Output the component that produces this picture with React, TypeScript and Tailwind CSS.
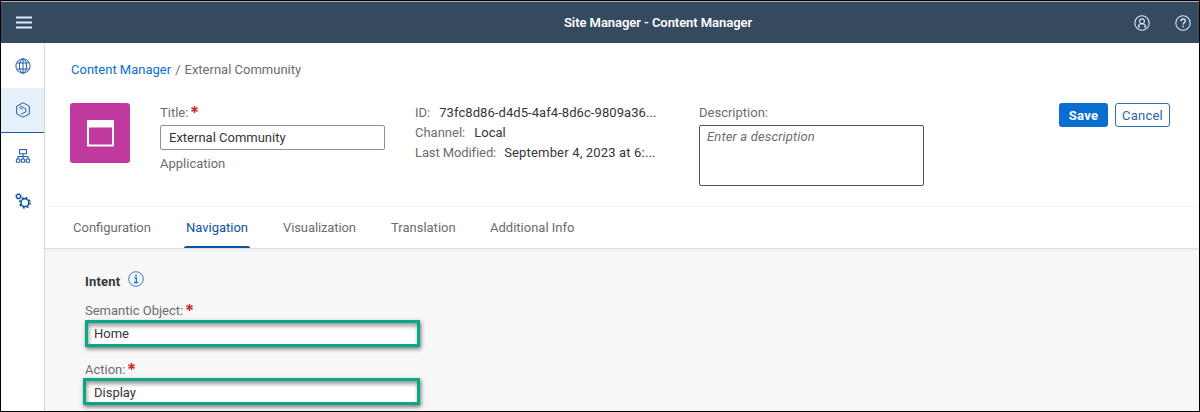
import React from "react";

type IconProps = { className?: string };

function GlobeIcon() {
  return (
    <svg className="h-4 w-4" viewBox="0 0 16 16" fill="none" stroke="#1f5fa8" strokeWidth="1">
      <circle cx="8" cy="8" r="7.1" />
      <ellipse cx="8" cy="8" rx="3.6" ry="7.1" />
      <path d="M8 1v14M1.8 5h12.4M1.8 11h12.4" />
    </svg>
  );
}

function ContentIcon() {
  return (
    <svg className="h-4 w-4" viewBox="0 0 16 16" fill="none" stroke="#1f5fa8" strokeWidth="1" strokeLinejoin="round">
      <path d="M8 .8l6.300 3.300v7.800L8 15.200l-6.300-3.300V4.100z" />
      <path d="M5.200 3.800l5.600 3v3.400M4.200 5.500l3.300 1.800M6.200 12.200l4.600-2.400" />
    </svg>
  );
}

function SitemapIcon() {
  return (
    <svg className="h-4 w-4" viewBox="0 0 16 16" fill="none" stroke="#1f5fa8" strokeWidth="1.1">
      <path d="M4.500 1.500h7v4.200h-7zM8 5.700v5.500M3 11V8.500h10V11" />
      <rect x="1.400" y="11" width="3.400" height="3.200" rx=".8" />
      <rect x="6.300" y="11" width="3.400" height="3.200" rx=".8" />
      <rect x="11.200" y="11" width="3.400" height="3.200" rx=".8" />
    </svg>
  );
}

function GearsIcon() {
  return (
    <svg className="h-4 w-4" viewBox="0 0 16 16" fill="none" stroke="#0d4f9c">
      <circle cx="9.900" cy="9.700" r="3.900" strokeWidth="1.500" />
      <circle cx="9.900" cy="9.700" r="5.200" strokeWidth="1.500" strokeDasharray="2 2.084" />
      <circle cx="3.500" cy="3.400" r="2" strokeWidth="1.100" />
      <circle cx="3.500" cy="3.400" r="2.800" strokeWidth=".9" strokeDasharray="1.100 1.100" />
    </svg>
  );
}

function UserIcon({ className }: IconProps) {
  return (
    <svg className={className} viewBox="0 0 16 16" fill="none" stroke="#d4e7fa" strokeWidth="1.1">
      <circle cx="8" cy="8" r="7.200" />
      <circle cx="8" cy="6.300" r="2.400" />
      <path d="M4.200 11.900c.2-2 1.500-3.200 3.800-3.200s3.600 1.200 3.800 3.200M4 11.900h2M10 11.900h2" />
    </svg>
  );
}

function HelpIcon({ className }: IconProps) {
  return (
    <svg className={className} viewBox="0 0 16 16" fill="none" stroke="#d4e7fa" strokeWidth="1.100">
      <circle cx="8" cy="8" r="7.200" />
      <path d="M5.900 6.300C5.900 4.800 6.800 4 8.100 4s2.200.8 2.200 2-2.200 1.900-2.200 3.600" strokeWidth="1.400" />
      <path d="M8.100 10.800v1.500" strokeWidth="1.500" />
    </svg>
  );
}

function InfoIcon() {
  return (
    <svg className="h-4 w-4" viewBox="0 0 16 16" fill="none" stroke="#2f7fd3" strokeWidth="1">
      <circle cx="8" cy="8" r="7.300" />
      <path d="M6.300 6.800h2V11.500M6 11.600h4.200" stroke="#0a6ed1" strokeWidth="1.300" />
      <path d="M7.200 4.500h1.600" stroke="#0a6ed1" strokeWidth="1.600" />
    </svg>
  );
}

function Required() {
  return (
    <svg className="ml-[3px] mt-[3px] h-[7px] w-[7px]" viewBox="0 0 8 8" stroke="#cc2929" strokeWidth="1.700">
      <path d="M4 0v8M.5 2l7 4M7.500 2l-7 4" />
    </svg>
  );
}

function SideItem({ active, children }: { active?: boolean; children: React.ReactNode }) {
  return (
    <div
      className={
        active
          ? "flex h-[45px] items-center justify-center border-b border-[#1f5fa8] bg-[#e5f0fa]"
          : "flex h-[45px] items-center justify-center"
      }
    >
      {children}
    </div>
  );
}

export default function App() {
  return (
    <div className="flex h-[412px] w-[1200px] flex-col overflow-hidden border border-black bg-white font-['Roboto','Noto_Sans',sans-serif] text-[13px] leading-5 text-[#6a6d70]">
      <header className="flex h-[42px] shrink-0 items-center border-t border-[#a9adb3] bg-[#354a5f] pl-[15px] pr-2">
        <svg className="h-4 w-4 shrink-0" viewBox="0 0 16 16" stroke="#dcecfb">
          <path d="M0 2.500h16M0 7.500h16M0 12.500h16" strokeWidth="1.800" />
        </svg>
        <h1 className="ml-[532px] flex-1 whitespace-nowrap text-[13px] font-semibold tracking-[-0.06px] text-white"><span>Site Manager - Content Manager</span></h1>
        <UserIcon className="mr-[25px] h-4 w-4" />
        <HelpIcon className="h-4 w-4" />
      </header>
      <div className="flex min-h-0 flex-1">
        <nav className="w-11 shrink-0 border-r border-[#d9d9d9]">
          <SideItem><GlobeIcon /></SideItem>
          <SideItem active><ContentIcon /></SideItem>
          <SideItem><SitemapIcon /></SideItem>
          <SideItem><GearsIcon /></SideItem>
        </nav>
        <main className="flex min-w-0 flex-1 flex-col">
          <section className="h-[164px] shrink-0 border-b border-[#f5f5f5] pl-[25px] pt-[17px]">
            <div className="flex gap-1 pl-px">
              <a className="text-[#0a6ed1]">Content Manager</a>
              <span>/</span>
              <span>External Community</span>
            </div>
            <div className="mt-[23px] flex items-start">
              <div className="flex h-[60px] w-[60px] items-center justify-center rounded-[3px] bg-[#c0399f]">
                <svg className="h-[27px] w-[27px]" viewBox="0 0 27 27">
                  <rect width="27" height="26.500" rx="1" fill="#fff" />
                  <path d="M2 7.500h23v17H2z" fill="#c0399f" />
                </svg>
              </div>
              <div className="ml-[30px] w-[225px]">
                <div className="flex h-[22px]"><span>Title:</span><Required /></div>
                <div className="flex h-[25px] items-center rounded-[2px] border border-[#89919a] pl-2 text-[#32363a]">
                  <span>External Community</span>
                </div>
                <div className="mt-1"><span>Application</span></div>
              </div>
              <dl className="ml-[30px] w-[284px] whitespace-nowrap">
                <div className="flex gap-[9px]"><dt>ID:</dt><dd className="tracking-[0.07px] text-[#32363a]">73fc8d86-d4d5-4af4-8d6c-9809a36...</dd></div>
                <div className="flex gap-[9px]"><dt>Channel:</dt><dd className="text-[#32363a]">Local</dd></div>
                <div className="flex gap-2"><dt className="tracking-[-0.1px]">Last Modified:</dt><dd className="tracking-[0.17px] text-[#32363a]">September 4, 2023 at 6:...</dd></div>
              </dl>
              <div className="w-[225px]">
                <div className="h-[22px]"><span>Description:</span></div>
                <div className="h-[61px] rounded-[2px] border border-[#505356] pl-[7px] pt-px italic tracking-[0.15px]"><span>Enter a description</span></div>
              </div>
              <div className="ml-[135px] flex gap-[7px] tracking-[0.25px]">
                <button className="h-6 w-[49px] rounded-[3px] bg-[#0a6ed1] pt-px font-bold leading-none text-white"><span>Save</span></button>
                <button className="h-6 w-[55px] rounded-[3px] border border-[#2a6fb8] pt-px leading-none text-[#2a66a8]"><span>Cancel</span></button>
              </div>
            </div>
          </section>
          <div className="flex h-[41px] shrink-0 whitespace-nowrap pl-7 pt-[11px]">
            <span className="h-5 w-[111px]">Configuration</span>
            <div className="mr-[33px] flex h-[31px] w-[66px] flex-col items-center justify-between whitespace-nowrap text-[#0854a0]">
              <span>Navigation</span>
              <span className="h-[3px] w-[66px] shrink-0 rounded-t-[2px] bg-[#0854a0]" />
            </div>
            <span className="h-5 w-[108px] tracking-[-0.1px]">Visualization</span>
            <span className="h-5 w-[99px]">Translation</span>
            <span className="h-5">Additional Info</span>
          </div>
          <section className="flex-1 bg-[#f7f7f7] pl-10 shadow-[inset_0_2px_2px_-1px_#d5d5d5]">
            <div className="flex h-[53px] items-start pt-[23px]">
              <h2 className="pt-px font-bold tracking-[0.2px] text-[#32363a]">Intent</h2>
              <div className="ml-2"><InfoIcon /></div>
            </div>
            <div className="flex h-[19px]"><span>Semantic Object:</span><Required /></div>
            <div className="flex h-[27px] w-[335px] items-center border-[3px] border-[#07a882] bg-white pl-[6px] text-[#32363a] shadow-[1px_2px_4px_#777,inset_1px_3px_4px_#999]">
              <span>Home</span>
            </div>
            <div className="mt-[13px] flex h-[18px]"><span>Action:</span><Required /></div>
            <div className="-ml-0.5 flex h-[27px] w-[337px] items-center border-[3px] border-[#07a882] bg-white pl-2 pt-0.5 text-[#32363a] shadow-[1px_2px_4px_#777,inset_1px_3px_4px_#999]">
              <span>Display</span>
            </div>
          </section>
        </main>
      </div>
    </div>
  );
}
